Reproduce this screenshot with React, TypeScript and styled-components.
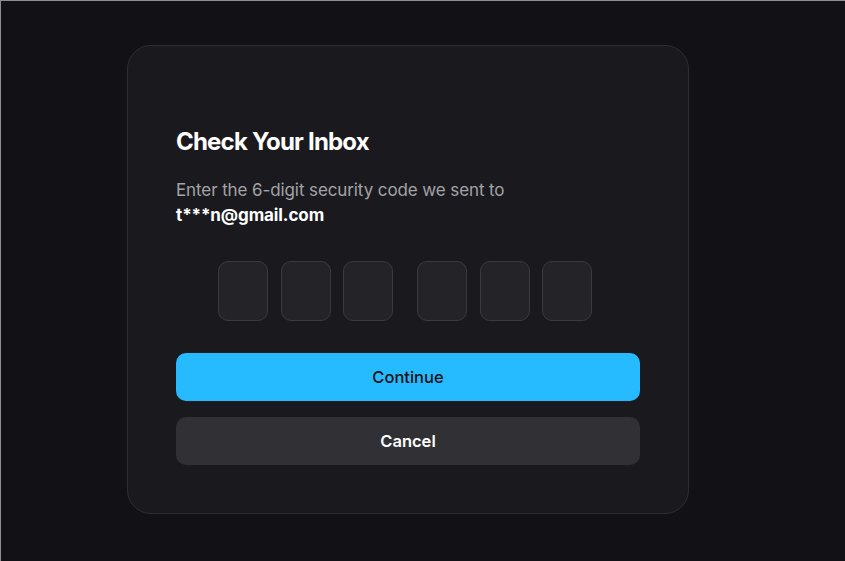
import React, { FC } from "react";
import styled, { createGlobalStyle } from "styled-components";

const GlobalStyle = createGlobalStyle`
  html, body {
    margin: 0;
    padding: 0;
    background: #111116;
  }
  * {
    box-sizing: border-box;
  }
`;

const Page = styled.main`
  display: flex;
  align-items: center;
  justify-content: center;
  width: 845px;
  height: 561px;
  padding: 0 30px 4px 0;
  background: #111116;
  border-top: 1px solid #8d8d90;
  border-left: 1px solid #8d8d90;
  font-family: Inter, "Liberation Sans", sans-serif;
`;

const Card = styled.section`
  display: flex;
  flex-direction: column;
  width: 562px;
  padding: 82px 48px 48px;
  background: #1a1a1e;
  border: 1px solid #2d2d32;
  border-radius: 24px;
`;

const Title = styled.h1`
  margin: 0;
  font-size: 24px;
  line-height: 28px;
  font-weight: 700;
  letter-spacing: -0.8px;
  color: #ffffff;
`;

const Lead = styled.p`
  margin: 22px 0 0;
  font-size: 17px;
  line-height: 25.5px;
  letter-spacing: -0.1px;
  color: #a3a3a8;
`;

const Email = styled.strong`
  display: block;
  font-weight: 700;
  color: #ffffff;
`;

const CodeRow = styled.div`
  display: flex;
  justify-content: center;
  gap: 24px;
  margin: 32px 0 0 -6px;
`;

const CodeGroup = styled.div`
  display: flex;
  gap: 12.5px;
`;

const Digit = styled.input`
  width: 50px;
  height: 60px;
  padding: 0;
  background: #242428;
  border: 1px solid #3a3a3f;
  border-radius: 10px;
  color: #ffffff;
  font-family: inherit;
  font-size: 22px;
  text-align: center;
  outline: none;
`;

const Actions = styled.div`
  display: flex;
  flex-direction: column;
  gap: 16px;
  margin-top: 32px;
`;

const Button = styled.button<{ $primary?: boolean }>`
  height: 48px;
  border: none;
  border-radius: 10px;
  font-family: inherit;
  font-size: 16.5px;
  font-weight: ${(p) => (p.$primary ? 500 : 600)};
  color: ${(p) => (p.$primary ? "#111114" : "#ffffff")};
  background: ${(p) => (p.$primary ? "#26bbff" : "#313035")};
  cursor: pointer;
`;

const App: FC = () => (
  <>
    <GlobalStyle />
    <Page>
      <Card>
        <Title>Check Your Inbox</Title>
        <Lead>
          Enter the 6-digit security code we sent to
          <Email>t***n@gmail.com</Email>
        </Lead>
        <CodeRow>
          <CodeGroup>
            <Digit maxLength={1} />
            <Digit maxLength={1} />
            <Digit maxLength={1} />
          </CodeGroup>
          <CodeGroup>
            <Digit maxLength={1} />
            <Digit maxLength={1} />
            <Digit maxLength={1} />
          </CodeGroup>
        </CodeRow>
        <Actions>
          <Button $primary>Continue</Button>
          <Button>Cancel</Button>
        </Actions>
      </Card>
    </Page>
  </>
);

export default App;
